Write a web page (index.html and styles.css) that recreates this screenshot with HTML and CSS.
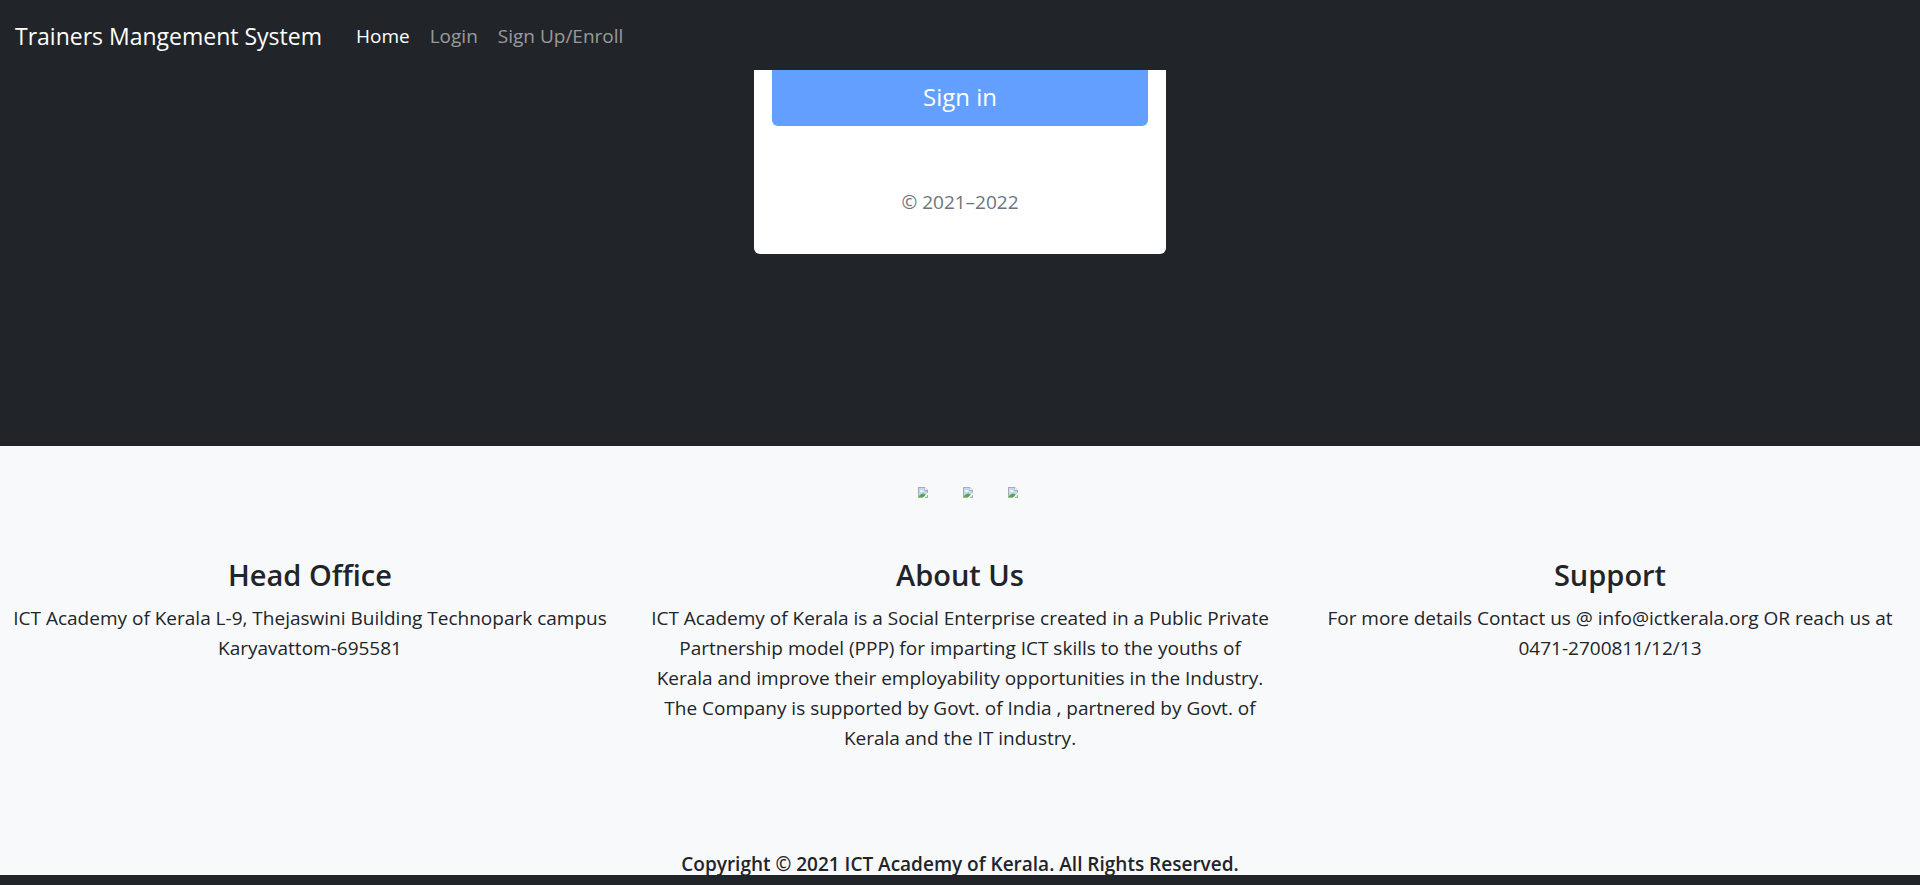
FILE: index.html
```html
<!DOCTYPE html>
<html lang="en">
<head>
<meta charset="utf-8">
<meta name="viewport" content="width=device-width, initial-scale=1">
<title>Trainers Mangement System</title>
<link rel="stylesheet" href="styles.css">
</head>
<body>
<svg class="sprite" aria-hidden="true">
  <symbol id="picture" viewBox="0 0 10 11">
    <path d="M0 0h7l3 3v8H0z" fill="#a9adb3"/>
    <path d="M1 1h5.500v3H9v6H1z" fill="#c6d7f5"/>
    <path d="M7 0l3 3H7z" fill="#e9ecf0"/>
    <path d="M2 4.500c0-1 1-1.500 2-1 1 0 1.500.5 1.500 1.200H2z" fill="#fff"/>
    <path d="M1 10V9c1.500-2 3-2.800 5-2.500L8 8v2z" fill="#4fae3c"/>
    <path d="M10 5.500L4.500 11H6.500L10 7.500z" fill="#f8f9fa"/>
  </symbol>
</svg>
<nav class="navbar">
  <a class="brand" href="#">Trainers Mangement System</a>
  <ul class="nav-list">
    <li><a class="nav-link active" href="#" aria-current="page">Home</a></li>
    <li><a class="nav-link" href="#">Login</a></li>
    <li><a class="nav-link" href="#">Sign Up/Enroll</a></li>
  </ul>
</nav>
<main class="main">
  <form class="card">
    <button class="sign-in" type="button">Sign in</button>
    <p class="years">© 2021–2022</p>
  </form>
</main>
<footer class="footer">
  <div class="social">
    <a href="#" aria-label="Social page 1"><svg class="icon"><use href="#picture"/></svg></a>
    <a href="#" aria-label="Social page 2"><svg class="icon"><use href="#picture"/></svg></a>
    <a href="#" aria-label="Social page 3"><svg class="icon"><use href="#picture"/></svg></a>
  </div>
  <div class="columns">
    <section>
      <h3 class="heading">Head Office</h3>
      <p class="text">ICT Academy of Kerala L-9, Thejaswini Building Technopark campus Karyavattom-695581</p>
    </section>
    <section>
      <h3 class="heading">About Us</h3>
      <p class="text">ICT Academy of Kerala is a Social Enterprise created in a Public Private Partnership model (PPP) for imparting ICT skills to the youths of Kerala and improve their employability opportunities in the Industry. The Company is supported by Govt. of India , partnered by Govt. of Kerala and the IT industry.</p>
    </section>
    <section>
      <h3 class="heading">Support</h3>
      <p class="text">For more details Contact us @ info@ictkerala.org OR reach us at <span class="phone">0471-2700811/12/13</span></p>
    </section>
  </div>
  <p class="copyright">Copyright © 2021 ICT Academy of Kerala. All Rights Reserved.</p>
</footer>
</body>
</html>
```
FILE: styles.css
```css
* {
  box-sizing: border-box;
}

body {
  margin: 0;
  background: #212529;
  color: #212529;
  font-family: "Segoe UI", "Open Sans", "Noto Sans", sans-serif;
  font-size: 19px;
  line-height: 30px;
}

p,
h3,
ul {
  margin: 0;
  padding: 0;
}

a {
  text-decoration: none;
}

.sprite {
  position: absolute;
  width: 0;
  height: 0;
}

.navbar {
  display: flex;
  align-items: center;
  gap: 24px;
  min-height: 70px;
  padding: 2px 15px 0;
  background: #212529;
}

.brand {
  color: #fff;
  font-size: 23px;
}

.nav-list {
  display: flex;
  list-style: none;
}

.nav-link {
  display: block;
  padding: 10px;
  color: rgba(255, 255, 255, 0.55);
}

.nav-link.active {
  color: #fff;
}

.main {
  display: flex;
  justify-content: center;
  padding-bottom: 192px;
}

.card {
  width: 412px;
  padding: 0 18px 37px;
  background: #fff;
  border-radius: 0 0 6px 6px;
  text-align: center;
}

.sign-in {
  display: block;
  width: 100%;
  padding: 8px 20px 10px;
  border: 0;
  border-radius: 0 0 6px 6px;
  background: #639fff;
  color: #fff;
  font-family: inherit;
  font-size: 24px;
  line-height: 38px;
}

.years {
  margin-top: 61px;
  color: #6c757d;
}

.footer {
  padding-top: 41px;
  background: #f8f9fa;
  text-align: center;
}

.social {
  display: flex;
  justify-content: center;
  gap: 35px;
  padding-left: 15px;
}

.social a {
  display: flex;
}

.icon {
  width: 10px;
  height: 11px;
}

.columns {
  display: grid;
  grid-template-columns: repeat(3, 1fr);
  gap: 30px;
  margin-top: 59px;
}

.heading {
  margin-bottom: 10px;
  font-size: 29px;
  font-weight: 600;
  line-height: 36px;
}

.phone {
  white-space: nowrap;
}

.copyright {
  margin-top: 100px;
  font-weight: 600;
  line-height: 22px;
}
```
